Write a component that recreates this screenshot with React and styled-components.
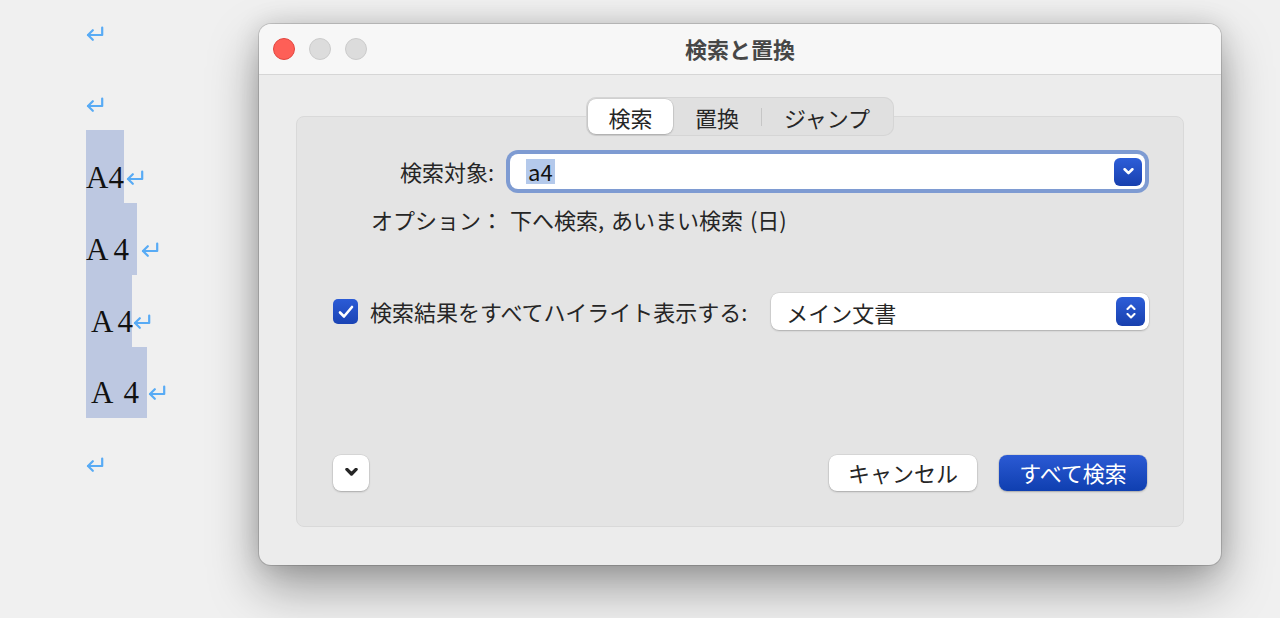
import React from "react";
import styled, { createGlobalStyle } from "styled-components";

const Global = createGlobalStyle`
  html, body { margin: 0; padding: 0; background: #f0f0f0; }
  body { font-family: "Noto Sans CJK JP", "Noto Sans", sans-serif; color: #262626; }
  * { box-sizing: border-box; }
`;

const Page = styled.div`
  display: flex;
  align-items: flex-start;
  width: 1280px;
  height: 618px;
  overflow: hidden;
  padding-left: 86px;
  background: #f0f0f0;
`;

/* ---------- document preview on the left ---------- */

const DocColumn = styled.div`
  width: 173px;
  flex: none;
  display: flex;
  flex-direction: column;
`;

const Line = styled.div`
  height: ${(p) => p.$h}px;
  display: flex;
  align-items: flex-end;
`;

const Sel = styled.div`
  align-self: stretch;
  width: ${(p) => p.$w}px;
  display: flex;
  align-items: flex-end;
  padding-bottom: 10px;
  background: #bdc8e1;
  font-family: "Liberation Serif", "DejaVu Serif", serif;
  font-size: 31px;
  line-height: 31px;
  color: #111;
`;

const Glyph = styled.span`
  margin-left: ${(p) => p.$ml || 0}px;
`;

const ReturnMark = styled.svg`
  flex: none;
  width: 18px;
  height: 15px;
  margin-bottom: 18px;
  margin-left: ${(p) => p.$ml || 0}px;
`;

const Return = ({ ml }) => (
  <ReturnMark $ml={ml} viewBox="0 0 18 15" fill="none" stroke="#58abf5" strokeWidth="2.2" strokeLinecap="round" strokeLinejoin="round">
    <path d="M16.2 1.5V9H2" />
    <path d="M6.8 4.2L2 9L6.8 13.8" />
  </ReturnMark>
);

const docLines = [
  { h: 59 },
  { h: 71 },
  { h: 73, sel: 38, a: 0, four: 0, gap: 2 },
  { h: 72, sel: 51, a: 0, four: 5, gap: 4 },
  { h: 72, sel: 46, a: 5, four: 4, gap: 1 },
  { h: 71, sel: 61, a: 5, four: 10, gap: 1 },
  { h: 72 },
];

/* ---------- dialog window ---------- */

const Window = styled.div`
  margin-top: 24px;
  width: 962px;
  height: 541px;
  flex: none;
  display: flex;
  flex-direction: column;
  border-radius: 12px;
  overflow: hidden;
  background: #ececec;
  box-shadow: 0 0 0 1px rgba(0, 0, 0, 0.14), 0 22px 50px rgba(0, 0, 0, 0.36),
    0 0 26px rgba(0, 0, 0, 0.13);
`;

const TitleBar = styled.div`
  position: relative;
  height: 51px;
  flex: none;
  display: flex;
  align-items: center;
  justify-content: center;
  background: #f7f7f7;
  border-bottom: 1px solid #d6d6d6;
`;

const Lights = styled.div`
  position: absolute;
  left: 14px;
  top: 14px;
  display: flex;
  gap: 14px;
`;

const Light = styled.span`
  width: 22px;
  height: 22px;
  border-radius: 50%;
  background: ${(p) => (p.$red ? "#fe5f57" : "#dcdcdc")};
  border: 1px solid ${(p) => (p.$red ? "#e2463f" : "#cbcbcb")};
`;

const Title = styled.div`
  font-size: 22px;
  font-weight: 700;
  color: #474747;
  margin-top: -3px;
`;

const Body = styled.div`
  flex: 1;
  display: flex;
  flex-direction: column;
  align-items: center;
  padding: 22px 37px 38px;
`;

const Segmented = styled.div`
  position: relative;
  z-index: 1;
  display: flex;
  align-items: center;
  height: 39px;
  padding: 2px;
  border-radius: 10px;
  background: #e0e0e0;
  box-shadow: inset 0 0 0 1px #d5d5d5;
`;

const Segment = styled.div`
  position: relative;
  width: ${(p) => p.$w}px;
  height: 35px;
  display: flex;
  align-items: center;
  justify-content: center;
  font-size: 22px;
  color: #262626;
  border-radius: 8px;
  background: ${(p) => (p.$active ? "#ffffff" : "transparent")};
  box-shadow: ${(p) => (p.$active ? "0 1px 2px rgba(0,0,0,0.2), 0 0 0 0.5px rgba(0,0,0,0.12)" : "none")};
`;

const SegDivider = styled.span`
  width: 1px;
  height: 18px;
  background: #c6c6c6;
`;

const Group = styled.div`
  align-self: stretch;
  flex: 1;
  margin-top: -20px;
  display: flex;
  flex-direction: column;
  padding: 33px 34px 35px 36px;
  background: #e4e4e4;
  border: 1px solid #d9d9d9;
  border-radius: 8px;
`;

const FieldRow = styled.div`
  display: flex;
  align-items: center;
  height: 43px;
`;

const Label = styled.div`
  width: 161px;
  flex: none;
  text-align: right;
  font-size: 22px;
  margin-right: 12px;
  margin-top: -2px;
`;

const FocusRing = styled.div`
  flex: 1;
  height: 43px;
  padding: 4px;
  border-radius: 12px;
  background: #7e9bd2;
`;

const Field = styled.div`
  height: 100%;
  display: flex;
  align-items: center;
  justify-content: space-between;
  padding: 0 3px 0 16px;
  border-radius: 8px;
  background: #ffffff;
`;

const Selected = styled.span`
  font-size: 22px;
  line-height: 25px;
  padding: 0 2px;
  background: #b4c9eb;
  color: #111;
`;

const BlueKnob = styled.div`
  width: ${(p) => p.$w}px;
  height: ${(p) => p.$h}px;
  display: flex;
  flex-direction: column;
  align-items: center;
  justify-content: center;
  gap: 3px;
  border-radius: 6px;
  background: linear-gradient(#2d5ed8, #1840ae);
`;

const OptionsLine = styled.div`
  margin-top: 12px;
  padding-left: 38px;
  font-size: 22px;
  line-height: 28px;
  word-spacing: 2px;
`;

const HighlightRow = styled.div`
  margin-top: 60px;
  display: flex;
  align-items: center;
`;

const Check = styled.div`
  width: 25px;
  height: 25px;
  flex: none;
  display: flex;
  align-items: center;
  justify-content: center;
  border-radius: 5px;
  background: linear-gradient(#2b5bd6, #1a43b4);
`;

const CheckLabel = styled.div`
  margin-left: 12px;
  font-size: 22px;
  white-space: nowrap;
  margin-top: -2px;
`;

const Popup = styled.div`
  margin-left: 24px;
  flex: 1;
  height: 37px;
  display: flex;
  align-items: center;
  justify-content: space-between;
  padding: 0 4px 0 15px;
  border-radius: 8px;
  background: #ffffff;
  font-size: 22px;
  box-shadow: 0 1px 2px rgba(0, 0, 0, 0.2), 0 0 0 0.5px rgba(0, 0, 0, 0.1);
`;

const ButtonRow = styled.div`
  margin-top: auto;
  display: flex;
  align-items: center;
  gap: 22px;
  padding-right: 2px;
`;

const Button = styled.button`
  width: ${(p) => p.$w}px;
  height: 36px;
  display: flex;
  align-items: center;
  justify-content: center;
  border: none;
  border-radius: 8px;
  font-family: inherit;
  font-size: 22px;
  padding: 0 0 2px;
  color: ${(p) => (p.$primary ? "#ffffff" : "#262626")};
  background: ${(p) => (p.$primary ? "linear-gradient(#2b5ad4, #0f3fb0)" : "#ffffff")};
  box-shadow: 0 1px 2px rgba(0, 0, 0, 0.22), 0 0 0 0.5px rgba(0, 0, 0, 0.1);
`;

const Spacer = styled.div`
  flex: 1;
`;

const Chevron = ({ up, color = "#fff", w = 10, h = 6, sw = 2.2 }) => (
  <svg width={w} height={h} viewBox="0 0 10 6" fill="none" stroke={color} strokeWidth={sw} strokeLinecap="round" strokeLinejoin="round">
    <path d={up ? "M1.5 5L5 1.5L8.5 5" : "M1.5 1L5 4.5L8.5 1"} />
  </svg>
);

export default function App() {
  return (
    <>
      <Global />
      <Page>
        <DocColumn>
          {docLines.map((l, i) => (
            <Line key={i} $h={l.h}>
              {l.sel ? (
                <>
                  <Sel $w={l.sel}>
                    <Glyph $ml={l.a}>A</Glyph>
                    <Glyph $ml={l.four}>4</Glyph>
                  </Sel>
                  <Return ml={l.gap} />
                </>
              ) : (
                <Return ml={0} />
              )}
            </Line>
          ))}
        </DocColumn>

        <Window>
          <TitleBar>
            <Lights>
              <Light $red />
              <Light />
              <Light />
            </Lights>
            <Title>検索と置換</Title>
          </TitleBar>
          <Body>
            <Segmented>
              <Segment $w={85} $active>検索</Segment>
              <Segment $w={88}>置換</Segment>
              <SegDivider />
              <Segment $w={130}>ジャンプ</Segment>
            </Segmented>
            <Group>
              <FieldRow>
                <Label>検索対象:</Label>
                <FocusRing>
                  <Field>
                    <Selected>a4</Selected>
                    <BlueKnob $w={28} $h={28}>
                      <Chevron w={11} h={7} sw={2.4} />
                    </BlueKnob>
                  </Field>
                </FocusRing>
              </FieldRow>
              <OptionsLine>オプション： 下へ検索, あいまい検索 (日)</OptionsLine>
              <HighlightRow>
                <Check>
                  <svg width="16" height="14" viewBox="0 0 16 14" fill="none" stroke="#fff" strokeWidth="2.6" strokeLinecap="round" strokeLinejoin="round">
                    <path d="M2 7.5L6 11.5L14 2" />
                  </svg>
                </Check>
                <CheckLabel>検索結果をすべてハイライト表示する:</CheckLabel>
                <Popup>
                  <span>メイン文書</span>
                  <BlueKnob $w={29} $h={29}>
                    <Chevron up w={10} h={6} sw={2.1} />
                    <Chevron w={10} h={6} sw={2.1} />
                  </BlueKnob>
                </Popup>
              </HighlightRow>
              <ButtonRow>
                <Button $w={36}>
                  <Chevron color="#262626" w={13} h={8} sw={2.6} />
                </Button>
                <Spacer />
                <Button $w={148}>キャンセル</Button>
                <Button $w={148} $primary>すべて検索</Button>
              </ButtonRow>
            </Group>
          </Body>
        </Window>
      </Page>
    </>
  );
}
